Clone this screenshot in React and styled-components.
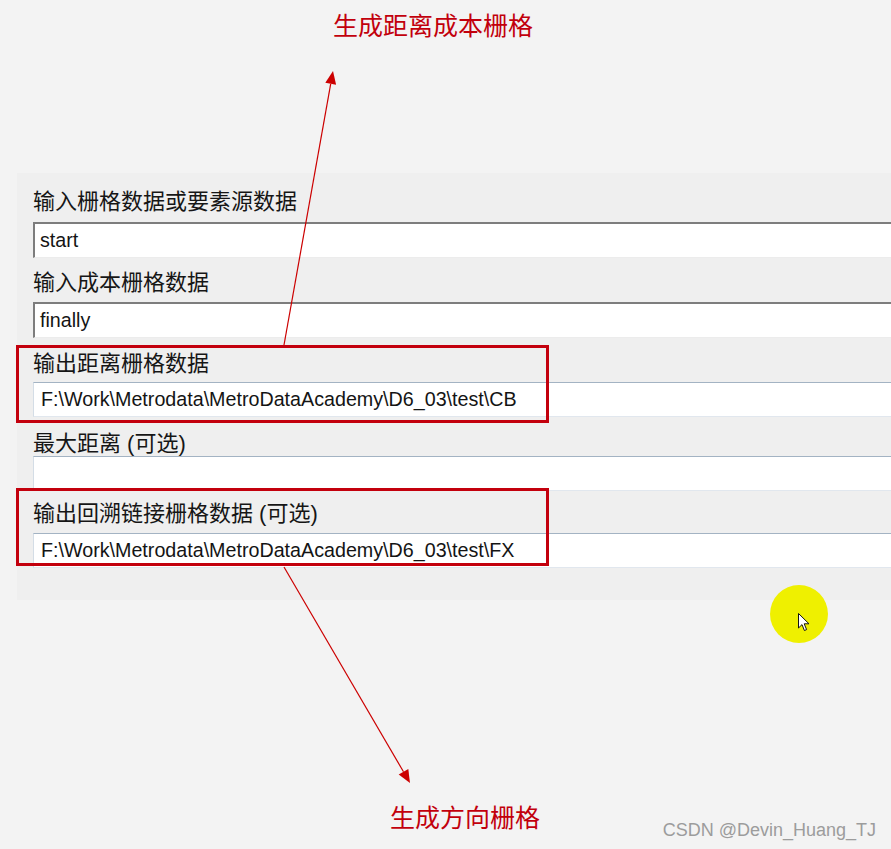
import React from 'react';
import styled, { createGlobalStyle } from 'styled-components';

const GlobalStyle = createGlobalStyle`
    html, body {
        margin: 0;
        padding: 0;
        background: #f3f3f3;
    }
`;

const Page = styled.div`
    position: relative;
    width: 891px;
    height: 849px;
    overflow: hidden;
    background: #f3f3f3;
    font-family: 'Liberation Sans', 'Noto Sans CJK SC', sans-serif;
`;

const Header = styled.div`
    height: 173px;
    box-sizing: border-box;
    padding: 9px 0 0 333px;
`;

const Note = styled.div`
    font-family: 'Noto Sans CJK SC', sans-serif;
    font-size: 25px;
    line-height: 30px;
    color: #c2000c;
    white-space: nowrap;
`;

const Panel = styled.div`
    margin-left: 17px;
    height: 427px;
    box-sizing: border-box;
    padding-left: 16px;
    background: #efefef;
`;

const Field = styled.div`
    position: relative;
`;

const Label = styled.div`
    height: ${p => p.h}px;
    box-sizing: border-box;
    display: flex;
    align-items: flex-end;
    padding-bottom: ${p => p.pb}px;
    font-size: 22px;
    line-height: 22px;
    color: #161616;
    white-space: nowrap;
`;

const Input = styled.div`
    height: ${p => (p.classic ? 36 : 35)}px;
    box-sizing: border-box;
    display: flex;
    align-items: center;
    padding-left: ${p => (p.classic ? 5 : 7)}px;
    background: #ffffff;
    border-top: ${p => (p.classic ? '2px solid #7d7d7d' : '1px solid #a3b3c3')};
    border-left: ${p => (p.classic ? '2px solid #7d7d7d' : '1px solid #d4dde6')};
    border-bottom: 1px solid ${p => (p.classic ? '#ececec' : '#e1e7ee')};
    font-size: 19.7px;
    color: #141414;
    white-space: nowrap;
`;

const Highlight = styled.div`
    position: absolute;
    left: -17px;
    top: ${p => p.top}px;
    width: 533px;
    height: 78px;
    box-sizing: border-box;
    border: 3px solid #c3000d;
    pointer-events: none;
`;

const Footer = styled.div`
    display: flex;
    align-items: flex-start;
    height: 249px;
    box-sizing: border-box;
    padding: 201px 15px 0 390px;
`;

const Watermark = styled.div`
    margin-left: auto;
    margin-top: 19px;
    font-size: 18px;
    line-height: 20px;
    color: #9c9c9c;
    white-space: nowrap;
`;

const Arrows = styled.svg`
    position: absolute;
    left: 0;
    top: 0;
    pointer-events: none;
`;

const Spot = styled.div`
    position: absolute;
    left: 770px;
    top: 585px;
    width: 58px;
    height: 58px;
    border-radius: 50%;
    background: #eff000;
`;

const Cursor = styled.svg`
    position: absolute;
    left: 28px;
    top: 28px;
`;

const fields = [
    { label: '输入栅格数据或要素源数据', value: 'start', h: 49, pb: 9, classic: true },
    { label: '输入成本栅格数据', value: 'finally', h: 44, pb: 8, classic: true },
    { label: '输出距离栅格数据', value: 'F:\\Work\\Metrodata\\MetroDataAcademy\\D6_03\\test\\CB', h: 44, pb: 7, mark: 7 },
    { label: '最大距离 (可选)', value: '', h: 39, pb: 1 },
    { label: '输出回溯链接栅格数据 (可选)', value: 'F:\\Work\\Metrodata\\MetroDataAcademy\\D6_03\\test\\FX', h: 42, pb: 8, mark: -3 },
];

const App = () => {
    return (
        <Page>
            <GlobalStyle />
            <Header>
                <Note>生成距离成本栅格</Note>
            </Header>
            <Panel>
                {fields.map((f, i) => (
                    <Field key={i}>
                        <Label h={f.h} pb={f.pb}>{f.label}</Label>
                        <Input classic={f.classic}>{f.value}</Input>
                        {f.mark !== undefined && <Highlight top={f.mark} />}
                    </Field>
                ))}
            </Panel>
            <Footer>
                <Note>生成方向栅格</Note>
                <Watermark>CSDN @Devin_Huang_TJ</Watermark>
            </Footer>

            <Arrows width="891" height="849" viewBox="0 0 891 849">
                <line x1="284" y1="345" x2="330.7" y2="83.8" stroke="#cc0000" strokeWidth="1.2" />
                <polygon points="333,71 336.1,84.8 325.3,82.8" fill="#cc0000" />
                <line x1="284" y1="567" x2="403.5" y2="771.8" stroke="#cc0000" strokeWidth="1.2" />
                <polygon points="410,783 408.3,769 398.7,774.6" fill="#cc0000" />
            </Arrows>

            <Spot>
                <Cursor width="12" height="19" viewBox="0 0 12 19">
                    <path d="M0.5 0.5 L0.5 15 L4 11.6 L6.4 17.5 L8.6 16.6 L6.2 10.8 L11 10.8 Z"
                        fill="#ffffff" stroke="#111111" strokeWidth="1" strokeLinejoin="round" />
                </Cursor>
            </Spot>
        </Page>
    );
};

export default App;
